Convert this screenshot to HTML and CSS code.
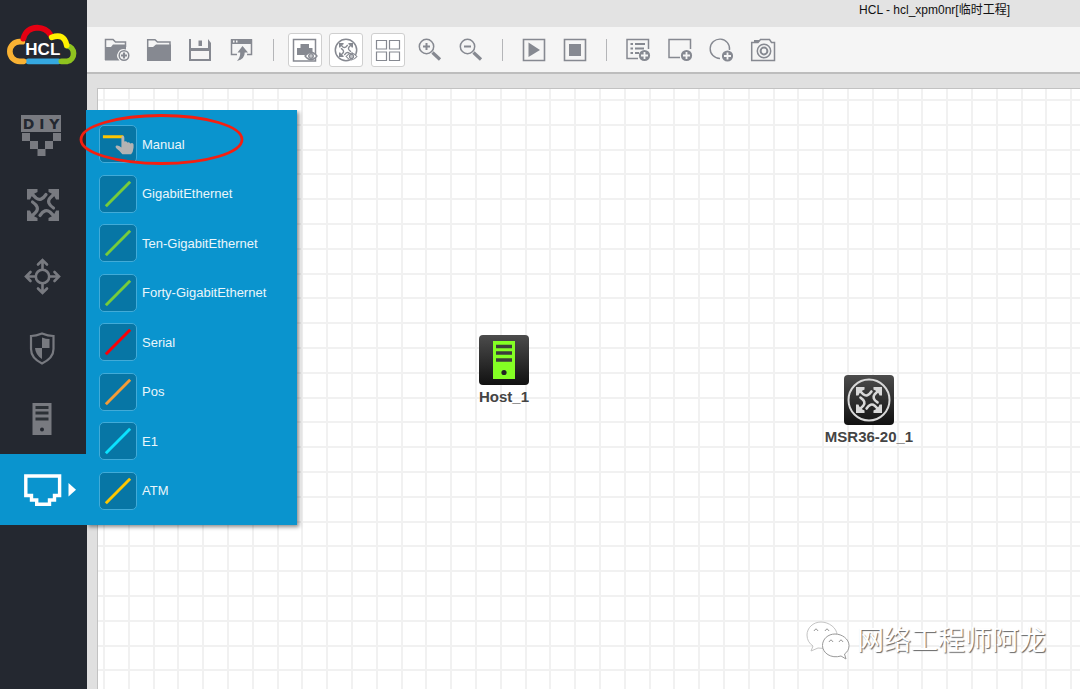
FILE: index.html
```html
<!DOCTYPE html>
<html lang="zh-CN">
<head>
<meta charset="utf-8">
<title>HCL - hcl_xpm0nr[临时工程]</title>
<link rel="stylesheet" href="styles.css">
</head>
<body>
<svg class="defs" aria-hidden="true">
  <defs>
    <g id="router-arm"><path d="M0 0H10.500V3L7.500 4.500L4.500 7.500L3 10.500H0Z" fill="currentColor"/><path d="M3 3L9 9Q14 13 19 5.500" fill="none" stroke="currentColor" stroke-width="3.200" stroke-linecap="round"/></g>
    <symbol id="router" viewBox="0 0 32 32">
      <use href="#router-arm"/><use href="#router-arm" transform="rotate(90 16 16)"/><use href="#router-arm" transform="rotate(180 16 16)"/><use href="#router-arm" transform="rotate(270 16 16)"/>
    </symbol>
    <symbol id="plus" viewBox="0 0 12 12"><circle cx="6" cy="6" r="5.6" fill="#868991"/><path d="M6 2.5V9.500M2.500 6H9.500" stroke="#f5f5f5" stroke-width="1.8"/></symbol>
    <symbol id="eye" viewBox="0 0 14 10"><path d="M1 5Q7-2.500 13 5Q7 12.500 1 5Z" fill="#fff" stroke="#868991" stroke-width="1.3"/><circle cx="7" cy="5" r="2.300" fill="#c2c4c8" stroke="#868991" stroke-width="1.3"/></symbol>
  </defs>
</svg>
<div class="app">
  <aside class="sidebar">
    <svg class="logo" viewBox="-3 0 261 150" role="img" aria-label="HCL">
      <g fill="none" stroke-width="17" stroke-linecap="round">
        <path d="M82 124H172" stroke="#35a8e0"/>
        <path d="M64 65H56A29 29 0 0 0 56 124H68" stroke="#f9b233"/>
        <path d="M181 124H199A24 24 0 0 0 198 77" stroke="#8fc31f"/>
        <path d="M67 56Q76 24 109 23Q135 24 148 44" stroke="#e60012"/>
        <path d="M152 52Q190 38 197 76" stroke="#fff100"/>
      </g>
      <text class="logo-text" x="73" y="105">HCL</text>
    </svg>
    <ul class="nav">
      <li><button class="nav-button" aria-label="DIY"><svg class="nav-icon" viewBox="0 0 87 71">
        <path fill="currentColor" d="M21 16H61V33H21ZM22 34H30V42H22ZM53 34H61V42H53ZM30 42H38V50H30ZM45 42H53V50H45ZM37.500 50H45.500V57H37.500Z"/>
        <text class="diy-text" x="41" y="30">D I Y</text></svg></button></li>
      <li><button class="nav-button" aria-label="Router"><svg class="nav-icon" viewBox="0 0 87 71"><use href="#router" x="27" y="19" width="32" height="32"/></svg></button></li>
      <li><button class="nav-button" aria-label="Switch"><svg class="nav-icon" viewBox="0 0 87 71">
        <g fill="none" stroke="currentColor" stroke-width="2.600" stroke-linecap="round"><circle cx="42.500" cy="35.500" r="6.700"/>
        <path d="M42.500 28V19.500M38 23.500L42.500 19L47 23.500M42.500 43V51.500M38 47.500L42.500 52L47 47.500M35 35.500H26.500M30.500 31L26 35.500L30.500 40M50 35.500H58.500M54.500 31L59 35.500L54.500 40"/></g></svg></button></li>
      <li><button class="nav-button" aria-label="Firewall"><svg class="nav-icon" viewBox="0 0 87 71">
        <path d="M42 21.500Q48 24 53.500 24V37Q53.500 46 42 51.500Q31 46 31 37V24Q36 24 42 21.500Z" fill="none" stroke="currentColor" stroke-width="2.200"/>
        <path d="M42 25.500Q46 27 49.500 27V36H42ZM42 36V47Q35.500 43 35 36Z" fill="currentColor"/></svg></button></li>
      <li><button class="nav-button" aria-label="Host"><svg class="nav-icon" viewBox="0 0 87 71">
        <path d="M32.500 20H51.500V52H32.500Z" fill="currentColor"/><path d="M35.500 24.500H48.500M35.500 30H48.500M35.500 36H48.500" stroke="#2c3136" stroke-width="3"/><circle cx="42" cy="46.500" r="2" fill="#242830"/></svg></button></li>
      <li class="nav-active"><button class="nav-button" aria-label="Link" aria-expanded="true"><svg class="nav-icon" viewBox="0 0 87 71">
        <path d="M25.800 22H59.600V41.500H54.500V46H49.500V50.300H36.700V46H31.500V41.500H25.800Z" fill="none" stroke="currentColor" stroke-width="3.400"/><path d="M68.500 29L76 35.700L68.500 42.500Z" fill="currentColor"/></svg></button>
        <ul class="link-menu">
          <li><button class="link-item"><svg class="link-icon" viewBox="0 0 37 37"><path d="M3 11H24" stroke="#ffc600" stroke-width="3"/><path d="M22 12Q22 10 23.500 10Q25 10 25 12V16Q27 15 28 17Q30 16 31 18Q34 16.500 34.500 19V22Q34 27 32 29H23Q21 26 17 23Q15 21 17 20Q19 19.500 22 22Z" fill="#b3b3b3"/></svg>Manual</button></li>
          <li><button class="link-item"><svg class="link-icon green" viewBox="0 0 37 37"><path d="M6 31L31 6"/></svg>GigabitEthernet</button></li>
          <li><button class="link-item"><svg class="link-icon green" viewBox="0 0 37 37"><path d="M6 31L31 6"/></svg>Ten-GigabitEthernet</button></li>
          <li><button class="link-item"><svg class="link-icon green" viewBox="0 0 37 37"><path d="M6 31L31 6"/></svg>Forty-GigabitEthernet</button></li>
          <li><button class="link-item"><svg class="link-icon red" viewBox="0 0 37 37"><path d="M6 31L31 6"/></svg>Serial</button></li>
          <li><button class="link-item"><svg class="link-icon orange" viewBox="0 0 37 37"><path d="M6 31L31 6"/></svg>Pos</button></li>
          <li><button class="link-item"><svg class="link-icon cyan" viewBox="0 0 37 37"><path d="M6 31L31 6"/></svg>E1</button></li>
          <li><button class="link-item"><svg class="link-icon yellow" viewBox="0 0 37 37"><path d="M6 31L31 6"/></svg>ATM</button></li>
        </ul>
        <svg class="highlight" viewBox="0 0 165 51" aria-hidden="true"><ellipse cx="82.500" cy="25.500" rx="80.500" ry="24" fill="none" stroke="#f51f10" stroke-width="2.800"/></svg>
      </li>
    </ul>
  </aside>
  <div class="workspace">
    <header class="titlebar">HCL - hcl_xpm0nr[临时工程]</header>
    <div class="toolbar" role="toolbar" aria-label="Tools">
      <div class="tools">
        <button class="tool" aria-label="New project"><svg viewBox="0 0 34 34"><path d="M5.500 27V6.500H13L15.500 9H25.500V14" fill="none" stroke="#868991" stroke-width="1.500"/><path d="M5 27.500V14H11L13 11.500H26V16.500A6.500 6.500 0 0 0 19.500 27.500Z" fill="#868991"/><circle cx="24" cy="22.500" r="4.800" fill="#f5f5f5" stroke="#868991" stroke-width="1.500"/><path d="M24 19.500V25.500M21 22.500H27" stroke="#868991" stroke-width="2.200"/></svg></button>
        <button class="tool" aria-label="Open project"><svg viewBox="0 0 34 34"><path d="M5.700 27V6.700H13L15.500 9H28V13" fill="none" stroke="#868991" stroke-width="1.500"/><path d="M5 28V14H11L14 11.500H29V28Z" fill="#868991"/></svg></button>
        <button class="tool" aria-label="Save project"><svg viewBox="0 0 34 34"><path d="M6 6H8V15H25V6L28 10V28H6ZM8 18V26H26V18Z" fill="#868991" fill-rule="evenodd"/><path d="M15.500 7.500H19V13H15.500Z" fill="#868991"/></svg></button>
        <button class="tool" aria-label="Export project"><svg viewBox="0 0 34 34"><path d="M12 21.500H6.500V7H26.500V21.500H22" fill="none" stroke="#868991" stroke-width="1.500"/><path d="M6 6H27V11H6Z" fill="#868991"/><path d="M8 8.500H9.500M11 8.500H12.500" stroke="#f5f5f5" stroke-width="2"/><path d="M17.500 13L23 19.500H19.700Q20 26 12 28Q15.500 24 15.200 19.500H12.500Z" fill="#868991"/></svg></button>
        <span class="separator"></span>
        <button class="tool boxed" aria-label="Show interfaces"><svg viewBox="0 0 34 34"><path d="M5.500 6.500H27.500V28H5.500Z" fill="none" stroke="#868991" stroke-width="1.500"/><path d="M9 15H12.500V11H21V15H24.500V22H9Z" fill="#868991"/><use href="#eye" x="16" y="18" width="14" height="10"/></svg></button>
        <button class="tool boxed" aria-label="Show devices"><svg viewBox="0 0 34 34"><circle cx="17" cy="17" r="10.700" fill="none" stroke="#868991" stroke-width="1.500"/><use href="#router" x="10" y="10" width="14" height="14"/><use href="#eye" x="16" y="19" width="13" height="9"/></svg></button>
        <button class="tool boxed" aria-label="Show grid"><svg viewBox="0 0 34 34"><path d="M5.500 7.500H15.500V16H5.500ZM18.500 7.500H28.500V16H18.500ZM5.500 19H15.500V27.500H5.500ZM18.500 19H28.500V27.500H18.500Z" fill="none" stroke="#868991" stroke-width="1.200"/></svg></button>
        <button class="tool" aria-label="Zoom in"><svg viewBox="0 0 34 34"><circle cx="13.500" cy="13.500" r="7.200" fill="none" stroke="#868991" stroke-width="1.500"/><path d="M13.500 10V17M10 13.500H17" stroke="#868991" stroke-width="2"/><path d="M19.500 19.500L27 26.500" stroke="#868991" stroke-width="3.200"/></svg></button>
        <button class="tool" aria-label="Zoom out"><svg viewBox="0 0 34 34"><circle cx="13.500" cy="13.500" r="7.200" fill="none" stroke="#868991" stroke-width="1.500"/><path d="M10 13.500H17" stroke="#868991" stroke-width="2"/><path d="M19.500 19.500L27 26.500" stroke="#868991" stroke-width="3.200"/></svg></button>
        <span class="separator"></span>
        <button class="tool" aria-label="Start all"><svg viewBox="0 0 34 34"><path d="M6.500 6.500H27.500V27.500H6.500Z" fill="none" stroke="#868991" stroke-width="1.600"/><path d="M11.500 9.500L23 17L11.500 24Z" fill="#868991"/></svg></button>
        <button class="tool" aria-label="Stop all"><svg viewBox="0 0 34 34"><path d="M6.500 6.500H27.500V27.500H6.500Z" fill="none" stroke="#868991" stroke-width="1.600"/><path d="M11 11H23V23H11Z" fill="#868991"/></svg></button>
        <span class="separator"></span>
        <button class="tool" aria-label="Add note"><svg viewBox="0 0 34 34"><path d="M17 25.500H6V6.500H27.500V16" fill="none" stroke="#868991" stroke-width="1.500"/><path d="M9.500 11H12M9.500 15.500H12M9.500 20H12M14 11H24M14 15.500H23M14 20H18" stroke="#868991" stroke-width="2"/><use href="#plus" x="17.500" y="16.500" width="12" height="12"/></svg></button>
        <button class="tool" aria-label="Add rectangle"><svg viewBox="0 0 34 34"><path d="M17 24.500H6V6.500H27.500V16" fill="none" stroke="#868991" stroke-width="1.500"/><use href="#plus" x="17.500" y="16.500" width="12" height="12"/></svg></button>
        <button class="tool" aria-label="Add ellipse"><svg viewBox="0 0 34 34"><path d="M16 25.500A9.700 9.700 0 1 1 25.500 17" fill="none" stroke="#868991" stroke-width="1.400"/><use href="#plus" x="17.500" y="17" width="12" height="12"/></svg></button>
        <button class="tool" aria-label="Screenshot"><svg viewBox="0 0 34 34"><path d="M5.700 27.500V9.500H12L14.500 6.500H23.500L25.500 9.500H28.500V27.500Z" fill="none" stroke="#868991" stroke-width="1.500"/><path d="M8 7H13V9H8Z" fill="#868991"/><circle cx="18" cy="18" r="6.700" fill="none" stroke="#868991" stroke-width="1.500"/><circle cx="18" cy="18" r="3.400" fill="none" stroke="#868991" stroke-width="2"/></svg></button>
      </div>
    </div>
    <main class="canvas">
      <svg class="grid" aria-hidden="true">
        <defs><pattern id="grid-lines" x="5" y="10" width="124" height="124" patternUnits="userSpaceOnUse"><g fill="#f1f1f1"><path d="M0 0H2V124H0ZM25 0H27V124H25ZM50 0H52V124H50ZM74 0H76V124H74ZM99 0H101V124H99Z"/><path d="M0 0H124V2H0ZM0 25H124V27H0ZM0 50H124V52H0ZM0 74H124V76H0ZM0 99H124V101H0Z"/></g></pattern></defs>
        <rect width="100%" height="100%" fill="url(#grid-lines)"/>
      </svg>
      <div class="node node-host">
        <svg class="node-icon" viewBox="0 0 50 50"><path d="M14 6H36V44H14Z" fill="#84ff24"/><path d="M17 11.500H33M17 18H33M17 25H33" stroke="#3c3c3c" stroke-width="3.600"/><circle cx="25" cy="37.500" r="2.600" fill="#222"/></svg>
        <span class="node-label">Host_1</span>
      </div>
      <div class="node node-router">
        <svg class="node-icon" viewBox="0 0 50 50"><circle cx="25" cy="25" r="20.500" fill="none" stroke="#d8d8d8" stroke-width="2"/><use href="#router" x="12" y="12" width="26" height="26"/></svg>
        <span class="node-label">MSR36-20_1</span>
      </div>
      <div class="watermark">
        <svg class="wechat" viewBox="0 0 44 40" aria-hidden="true">
          <g fill="#fff" stroke-width="1"><path d="M15 1C7 1 1 7 1 14Q1 21 7 25L5 30L12 27Q19 29 24 25Q31 21 31 14C31 7 23 1 15 1Z" stroke="#c4c4c4"/><path d="M29 13C22 13 16.500 18 16.500 24.500C16.500 32 25 38 35 35L40 38L38.500 33Q43 30 43 24.500C43 18 36 13 29 13Z" stroke="#999"/></g>
          <path d="M8 10Q10 6 12 10M19 10Q21 6 23 10M23 21Q25 17 27 21M33 21Q35 17 37 21" fill="none" stroke="#999"/>
        </svg>
        <span>网络工程师阿龙</span>
      </div>
    </main>
  </div>
</div>
</body>
</html>
```

FILE: styles.css
```css
* { box-sizing: border-box; }
body {
  margin: 0;
  font-family: "Liberation Sans", Arial, "Noto Sans CJK SC", sans-serif;
  background: #e0e0e0;
}
button {
  margin: 0;
  padding: 0;
  border: 0;
  background: none;
  color: inherit;
  font: inherit;
  cursor: pointer;
}
ul { margin: 0; padding: 0; list-style: none; }
svg { display: block; }
.defs { position: absolute; width: 0; height: 0; }
.app { display: flex; min-height: 100vh; }

.sidebar { flex: none; width: 87px; padding-top: 20px; background: #242830; }
.logo { width: 87px; height: 50px; }
.logo-text { font-size: 51px; font-weight: bold; fill: #fff; }
.nav { margin-top: 29px; }
.nav > li { position: relative; }
.nav-button { display: block; width: 100%; color: #787a80; }
.nav-icon { width: 87px; height: 71px; }
.diy-text {
  font: bold 14px "DejaVu Sans", sans-serif;
  text-anchor: middle;
  fill: #242830;
}
.nav-active { background: #0a94ce; }
.nav-active .nav-button { color: #fff; }

.link-menu {
  position: absolute;
  left: 86px;
  bottom: 0;
  z-index: 2;
  display: flex;
  flex-direction: column;
  justify-content: space-between;
  width: 211px;
  height: 415px;
  padding: 15px 13px;
  background: #0a94ce;
  box-shadow: 2px 2px 4px rgba(0, 0, 0, 0.45);
}
.nav-active .link-menu { clip-path: inset(0 -8px -8px 0); }
.link-item {
  display: flex;
  align-items: center;
  gap: 5px;
  width: 100%;
  color: #eaf6fb;
  font-size: 13px;
  text-align: left;
}
.link-icon {
  width: 38px;
  height: 38px;
  border: 1px solid #41abd8;
  border-radius: 5px;
  background: #0776a5;
  fill: none;
  stroke-width: 3;
}
.green { stroke: #76cc3b; }
.red { stroke: #fb0007; }
.orange { stroke: #f49b37; }
.cyan { stroke: #0be2ff; }
.yellow { stroke: #ffc600; }
.highlight {
  position: absolute;
  left: 79px;
  bottom: 360px;
  z-index: 3;
  width: 165px;
  height: 51px;
  pointer-events: none;
}

.workspace { flex: 1; display: flex; flex-direction: column; min-width: 0; }
.titlebar {
  height: 27px;
  padding-right: 70px;
  background: #e3e3e3;
  color: #111;
  font-size: 12px;
  line-height: 20px;
  text-align: right;
}
.toolbar {
  padding: 6px 13px 5px;
  border-bottom: 2px solid #bdbdbd;
  background: #f5f5f5;
}
.tools {
  display: flex;
  justify-content: space-between;
  align-items: center;
  max-width: 680px;
}
.tool { width: 34px; height: 34px; color: #868991; }
.boxed { border: 1px solid #cfcfcf; border-radius: 3px; background: #fff; }
.boxed svg { margin: -1px; }
.tool svg { width: 34px; height: 34px; }
.separator { width: 1px; height: 22px; margin: 0 6px; background: #b4b5b8; }

.canvas {
  position: relative;
  flex: 1;
  margin: 14px 0 0 10px;
  border: solid #c2c2c2;
  border-width: 1px 0 0 1px;
  background: #fff;
  overflow: hidden;
}
.grid { position: absolute; inset: 0; width: 100%; height: 100%; }
.node {
  position: absolute;
  display: flex;
  flex-direction: column;
  align-items: center;
  gap: 3px;
  width: 100px;
}
.node-host { left: 356px; top: 246px; }
.node-router { left: 721px; top: 286px; }
.node-icon {
  width: 50px;
  height: 50px;
  border-radius: 4px;
  background: linear-gradient(#4c4c4c, #111);
  color: #d8d8d8;
}
.node-label { color: #444; font-size: 15px; font-weight: bold; line-height: 18px; }
.watermark {
  position: absolute;
  right: 34px;
  bottom: 28px;
  display: flex;
  align-items: center;
  gap: 7px;
  color: #fff;
  font-size: 27px;
  line-height: 40px;
  text-shadow: 1px 1px 1px #666;
}
.wechat { width: 44px; height: 40px; }
```
